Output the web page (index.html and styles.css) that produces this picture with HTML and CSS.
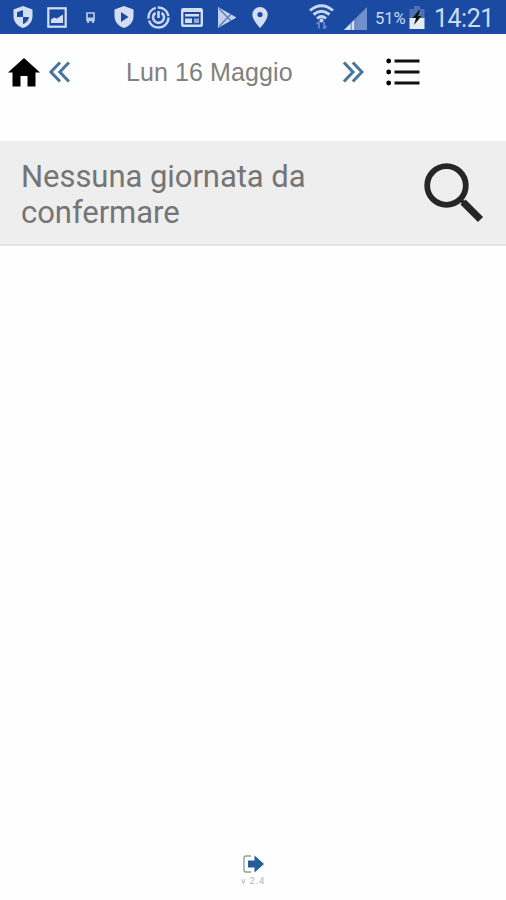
FILE: index.html
```html
<!DOCTYPE html>
<html lang="it">
<head>
  <meta charset="UTF-8" />
  <meta name="viewport" content="width=device-width, initial-scale=1" />
  <title>Giornate da confermare</title>
  <link rel="stylesheet" href="styles.css">
</head>
<body>
  <!-- Status bar -->
  <div class="status-bar">
    <div class="notifications">
      <svg class="shield" width="20" height="22" viewBox="0 0 20 22">
        <path d="M10 0L19.5 3.5V10C19.5 16 15.5 20 10 22C4.5 20 .5 16 .5 10V3.5Z" fill="#d3def3"/>
        <path d="M10 4V11H4V6.3ZM10 11H16C15.5 14.5 13 17 10 18.2Z" fill="#1b4aa3"/>
      </svg>
      <svg class="picture" width="20" height="21" viewBox="0 0 20 21">
        <rect x="1.3" y="1.3" width="17.4" height="18.4" fill="none" stroke="#d3def3" stroke-width="2.2"/>
        <path d="M4 16V12.5L7 10.5L10 11.5L16 7.5V16Z" fill="#d3def3"/>
      </svg>
      <svg class="bus" width="9" height="11" viewBox="0 0 9 11">
        <path d="M1 1H8V8.5H1Z" fill="none" stroke="#b9c8e8" stroke-width="1.7"/>
        <path d="M1 5.5H8V8H1ZM1 9H3V11H1ZM6 9H8V11H6Z" fill="#b9c8e8"/>
      </svg>
      <svg class="guard" width="20" height="22" viewBox="0 0 20 22">
        <path d="M10 0L19.5 3.5V10C19.5 16 15.5 20 10 22C4.5 20 .5 16 .5 10V3.5Z" fill="#d3def3"/>
        <path d="M7 6L14.5 11L7 16Z" fill="#1b4aa3"/>
      </svg>
      <svg class="disc" width="23" height="23" viewBox="0 0 23 23" fill="none" stroke="#c9d6ef">
        <circle cx="11.5" cy="11.5" r="10" stroke-width="2.4" stroke-dasharray="28 2 14 2 15 1.8"/>
        <path d="M8.5 6.8A5.5 5.5 0 1 0 14.5 6.8" stroke-width="2.6"/>
        <path d="M11.5 5V12" stroke-width="2.6"/>
      </svg>
      <svg class="news" width="22" height="19" viewBox="0 0 22 19">
        <rect x="1.2" y="1.2" width="19.6" height="16.6" rx="1" fill="none" stroke="#d3def3" stroke-width="2.4"/>
        <path d="M1 1H21V4H1ZM4 6H18V8.5H4ZM4 10.5H11V15H4Z" fill="#d3def3"/>
        <path d="M13 10.5H18V15H13Z" fill="#91a9d7"/>
      </svg>
      <svg class="store" width="20" height="21" viewBox="0 0 20 21">
        <path d="M1 0L19.5 10.5L1 21Z" fill="#c3d1ec"/>
        <path d="M2 1.5L14 14M2 19.5L14 7" stroke="#517ac0" stroke-width="1.2"/>
      </svg>
      <svg class="pin" width="16" height="21" viewBox="0 0 16 21">
        <path d="M8 0A7.7 7.7 0 0 0 .3 7.7C.3 13 8 21 8 21S15.7 13 15.7 7.7A7.7 7.7 0 0 0 8 0Z" fill="#d3def3"/>
        <circle cx="8" cy="7.5" r="2.6" fill="#1b4aa3"/>
      </svg>
    </div>
    <div class="system">
      <svg class="wifi" width="25" height="25" viewBox="0 0 25 25">
        <g fill="none" stroke="#c9d6ef" stroke-width="2.9">
          <path d="M1 6.5Q12.5 -3 24 6.5M4.5 10.5Q12.5 4 20.5 10.5M8 14.5Q12.5 10.5 17 14.5"/>
        </g>
        <circle cx="12.5" cy="16.500" r="2" fill="#c9d6ef"/>
        <path d="M7.500 20L10 18V24.500M17.500 22L15 24.500V18" fill="none" stroke="#6688c5" stroke-width="1.8"/>
      </svg>
      <svg class="signal" width="23" height="23" viewBox="0 0 24 24">
        <path d="M24 0V24H0Z" fill="#6f90cb"/>
        <path d="M11 13V24H0Z" fill="#d3def3"/>
        <path d="M7.5 16V24M11.5 12V24" stroke="#5277ba" stroke-width="1"/>
      </svg>
      <span class="percent">51%</span>
      <svg class="battery" width="16" height="23" viewBox="0 0 16 23">
        <path d="M5 0H11V3H15.5V12H.5V3H5Z" fill="#4b70b4"/>
        <path d="M.5 12H15.5V23H.5Z" fill="#e5ebf5"/>
        <path d="M10 4L3.500 12H7L5 19L12.500 10H9L11 4Z" fill="#111"/>
      </svg>
      <span class="clock">14:21</span>
    </div>
  </div>

  <!-- Day navigation -->
  <header class="day-nav">
    <svg class="home" width="32" height="29" viewBox="0 0 32 29">
      <path d="M16 0L32 14.5H27.5V28.500H19.5V18H12.500V28.500H4.5V14.5H0Z" fill="#000"/>
    </svg>
    <svg class="prev" width="22" height="24" viewBox="0 0 23 24" fill="none" stroke="#47769f" stroke-width="3.200">
      <path d="M11.5 2L2 12L11.5 22M20.8 2L11.3 12L20.8 22"/>
    </svg>
    <span class="day">Lun 16 Maggio</span>
    <svg class="next" width="22" height="24" viewBox="0 0 23 24" fill="none" stroke="#47769f" stroke-width="3.200">
      <path d="M2 2L11.5 12L2 22M11.3 2L20.8 12L11.3 22"/>
    </svg>
    <svg class="list" width="34" height="28" viewBox="0 0 34 28">
      <path d="M8.5 3H33.5M8.5 14H33.5M8.5 25H33.5" stroke="#111" stroke-width="2.8"/>
      <circle cx="2.7" cy="3" r="2.4"/>
      <circle cx="2.7" cy="14" r="2.4"/>
      <circle cx="2.7" cy="25" r="2.4"/>
    </svg>
  </header>

  <!-- Message -->
  <main class="message">
    <p>Nessuna giornata da confermare</p>
    <svg class="search" width="60" height="60" viewBox="0 0 60 60" fill="none" stroke="#262626">
      <circle cx="22.5" cy="22.5" r="19.3" stroke-width="5.8"/>
      <path d="M36 36L40 40" stroke-width="3.5"/>
      <path d="M39 39L56.5 56.5" stroke-width="7.3"/>
    </svg>
  </main>

  <footer>
    <svg class="logout" width="23" height="20" viewBox="0 0 23 20">
      <path d="M9 2H4Q2 2 2 4V16Q2 18 4 18H9" fill="none" stroke="#999" stroke-width="1.3"/>
      <path d="M6 6.5H12.5V1.5L22 10L12.5 18.5V13.5H6Z" fill="#225f98"/>
    </svg>
    <span class="version">v 2.4</span>
  </footer>
</body>
</html>
```

FILE: styles.css
```css
body {
  margin: 0;
  height: 900px;
  display: flex;
  flex-direction: column;
  background: #fefefe;
  font-family: Roboto, sans-serif;
}
svg {
  display: block;
  flex: none;
}
.status-bar {
  display: flex;
  justify-content: space-between;
  height: 34px;
  padding: 0 13px;
  background: #1b4aa3;
  color: #cfdbf1;
}
.notifications, .system {
  display: flex;
  align-items: center;
}
.picture {
  margin-left: 14px;
}
.bus {
  margin-left: 19px;
}
.guard {
  margin-left: 19px;
}
.disc {
  margin-left: 13px;
}
.news {
  margin-left: 11px;
}
.store {
  margin-left: 14px;
}
.pin {
  margin-left: 15px;
}
.wifi {
  margin-bottom: 2px;
}
.signal {
  margin-left: 10px;
  margin-top: 2px;
}
.percent {
  width: 34px;
  margin-left: 8px;
  padding-top: 2px;
  font-size: 16.5px;
}
.clock {
  width: 59px;
  margin-left: 9px;
  padding-top: 3px;
  font-size: 25px;
  letter-spacing: -0.5px;
}
.day-nav {
  display: flex;
  align-items: center;
  height: 76px;
  margin-bottom: 31px;
  padding-left: 8px;
}
.prev {
  margin-left: 9px;
}
.day {
  width: 216px;
  margin-left: 55px;
  padding-top: 1px;
  font-family: "Liberation Sans", sans-serif;
  font-size: 25px;
  letter-spacing: 0.1px;
  color: #808080;
}
.list {
  margin-left: 22px;
}
.message {
  display: flex;
  align-items: center;
  justify-content: space-between;
  height: 103px;
  padding: 0 22px 0 21px;
  background: #eee;
  border-bottom: 2px solid #e5e5e5;
}
.message p {
  width: 300px;
  margin: 0;
  padding-top: 4px;
  font-size: 31px;
  line-height: 36px;
  letter-spacing: -0.05px;
  color: #757575;
}
footer {
  display: flex;
  flex-direction: column;
  align-items: center;
  margin-top: auto;
  padding-bottom: 13px;
}
.version {
  font-size: 9.5px;
  line-height: 13px;
  letter-spacing: 0.8px;
  color: #b5b5b5;
}
```
